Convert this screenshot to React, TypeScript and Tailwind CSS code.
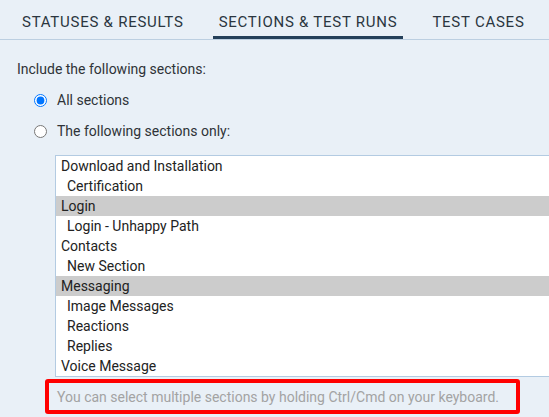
const sections: { name: string; depth: number; selected?: boolean }[] = [
  { name: "Download and Installation", depth: 0 },
  { name: "Certification", depth: 1 },
  { name: "Login", depth: 0, selected: true },
  { name: "Login - Unhappy Path", depth: 1 },
  { name: "Contacts", depth: 0 },
  { name: "New Section", depth: 1 },
  { name: "Messaging", depth: 0, selected: true },
  { name: "Image Messages", depth: 1 },
  { name: "Reactions", depth: 1 },
  { name: "Replies", depth: 1 },
  { name: "Voice Message", depth: 0 },
];

const tabs = [
  { label: "STATUSES & RESULTS", active: false },
  { label: "SECTIONS & TEST RUNS", active: true },
  { label: "TEST CASES", active: false },
];

export default function App() {
  return (
    <div className="w-full h-[417px] overflow-hidden bg-[#e9f0f7] text-[#2f3338] font-['Roboto',sans-serif]">
      {/* Tabs */}
      <div className="flex h-10 border-b border-[#bccfe1] pl-[16px] whitespace-nowrap">
        {tabs.map((t) => (
          <div
            key={t.label}
            className={
              t.active
                ? "shrink-0 flex items-center px-[6px] mr-[23px] text-[15px] tracking-[0.75px] text-[#2b3640] border-b-[3px] border-[#24405a] pt-[8px]"
                : "shrink-0 flex items-center px-[6px] mr-[23px] text-[15px] tracking-[0.75px] text-[#2b3640] border-b-[3px] border-transparent pt-[8px]"
            }
          >
            {t.label}
          </div>
        ))}
      </div>

      {/* Section picker */}
      <div className="pl-[17px] pt-[19px]">
        <p className="text-sm leading-5">Include the following sections:</p>

        <label className="flex items-center gap-[10px] pl-[17px] mt-[11px] h-5 text-sm">
          <input type="radio" name="sections" defaultChecked className="m-0 w-[13px] h-[13px]" />
          All sections
        </label>
        <label className="flex items-center gap-[10px] pl-[17px] mt-[11px] h-5 text-sm">
          <input type="radio" name="sections" className="m-0 w-[13px] h-[13px]" />
          The following sections only:
        </label>

        <div className="ml-[38px] mt-[14px] w-[520px] bg-white border border-[#b3cbe2]">
          {sections.map((s) => (
            <div
              key={s.name}
              className={
                (s.selected ? "bg-[#cccccc] " : "") +
                (s.depth ? "pl-[11px] " : "pl-[5px] ") +
                "h-5 leading-5 text-sm text-[#222]"
              }
            >
              {s.name}
            </div>
          ))}
        </div>

        <div className="ml-[28px] mt-[2px] w-[475px] h-[35px] border-4 border-[#ff0000] rounded-[3px] flex items-center pl-[8px]">
          <span className="text-sm text-[#a3a3a3]">
            You can select multiple sections by holding Ctrl/Cmd on your keyboard.
          </span>
        </div>
      </div>
    </div>
  );
}
